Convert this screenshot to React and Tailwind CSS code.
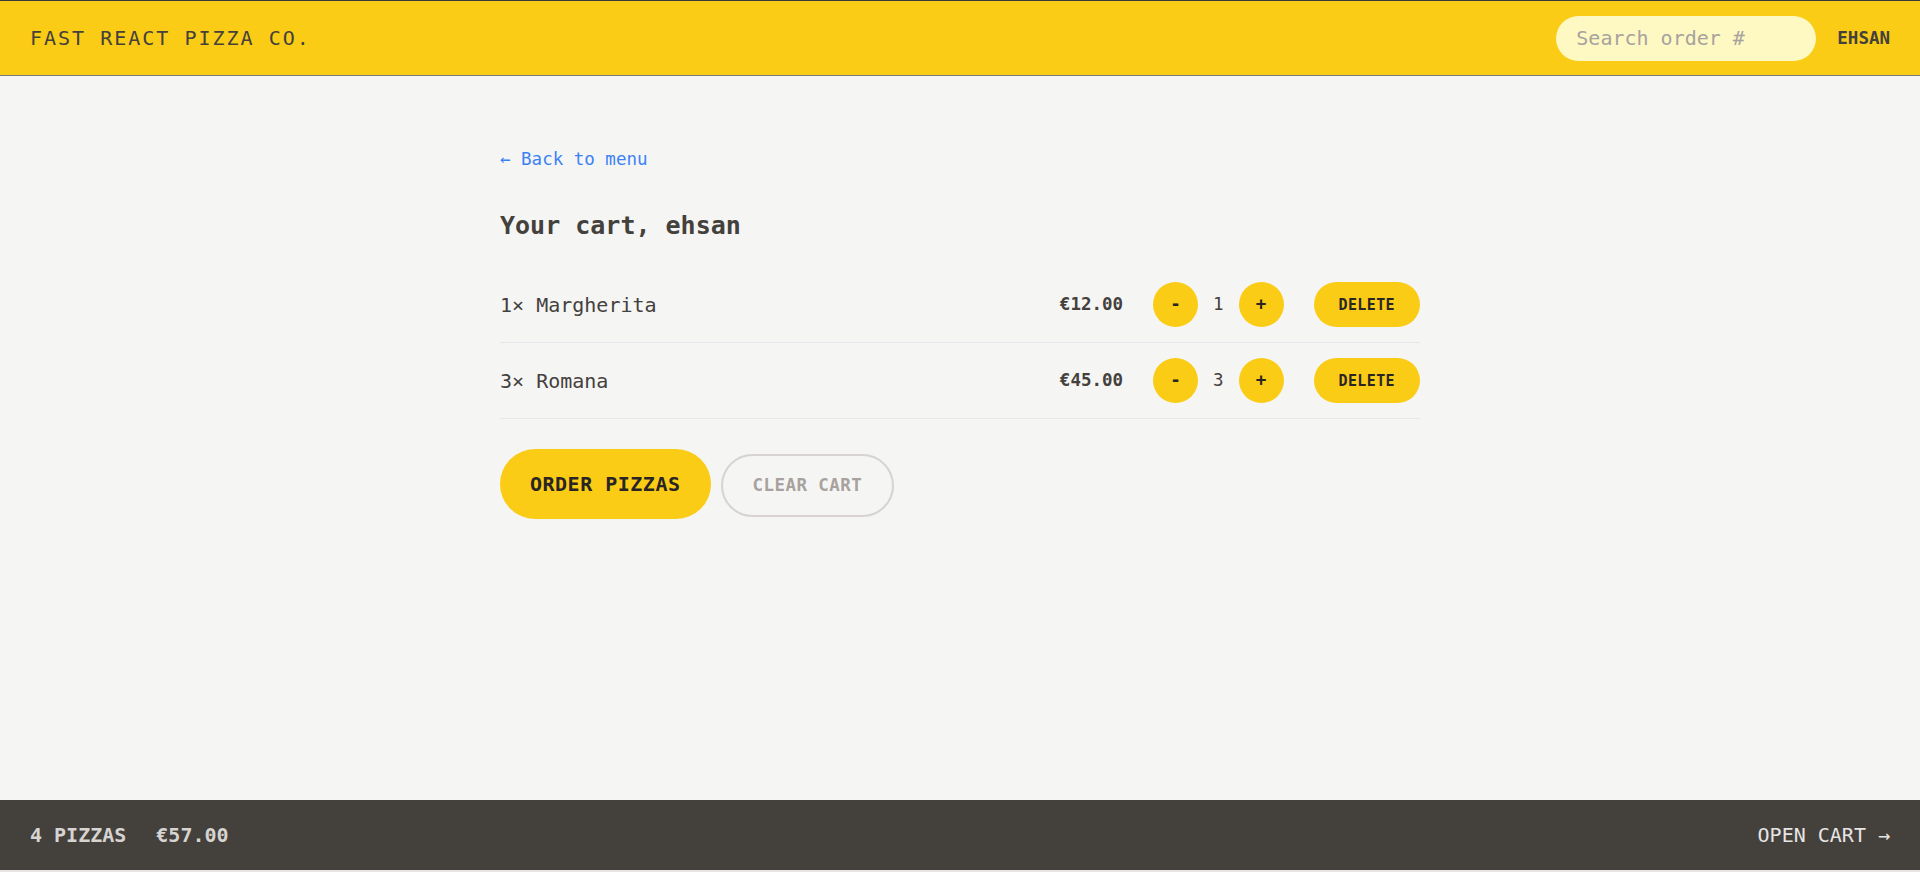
import React, { useState } from "react";

const CART = [
  { pizzaId: 1, name: "Margherita", quantity: 1, unitPrice: 12 },
  { pizzaId: 2, name: "Romana", quantity: 3, unitPrice: 15 },
];

const formatCurrency = (value) =>
  new Intl.NumberFormat("en", { style: "currency", currency: "EUR" }).format(value);

function Header() {
  return (
    <header className="flex h-[76px] items-center justify-between border-t border-b border-t-[#3a3a3a] border-b-[#7a7a7a] bg-[#facc15] px-[30px] uppercase">
      <a href="#" className="text-[20px] leading-[30px] tracking-[0.1em] text-[#44403c]">
        Fast React Pizza Co.
      </a>
      <div className="flex items-center gap-[21px]">
        <input
          placeholder="Search order #"
          className="h-[45px] w-[260px] rounded-full bg-[#fef9c3] px-[20px] text-[20px] text-[#44403c] outline-none placeholder:text-[#a8a29e]"
        />
        <span className="text-[17.5px] font-semibold leading-[25px] text-[#44403c]">ehsan</span>
      </div>
    </header>
  );
}

function RoundButton({ children }) {
  return (
    <button className="flex h-[45px] w-[45px] items-center justify-center rounded-full bg-[#facc15] text-[17.5px] font-semibold leading-[25px] text-[#292524]">
      {children}
    </button>
  );
}

function CartItem({ item }) {
  return (
    <li className="flex items-center justify-between border-b border-[#e5e7eb] py-[15px]">
      <p className="pt-[1px] text-[20px] leading-[30px]">
        {item.quantity}&times; {item.name}
      </p>
      <div className="flex items-center gap-[30px]">
        <p className="text-[17.5px] font-bold leading-[25px]">
          {formatCurrency(item.quantity * item.unitPrice)}
        </p>
        <div className="flex items-center gap-[15px]">
          <RoundButton>-</RoundButton>
          <span className="w-[10.5px] text-center text-[17.5px] font-medium leading-[25px]">
            {item.quantity}
          </span>
          <RoundButton>+</RoundButton>
        </div>
        <button className="h-[45px] rounded-full bg-[#facc15] px-[25px] text-[15px] font-semibold uppercase leading-[20px] tracking-[0.025em] text-[#292524]">
          Delete
        </button>
      </div>
    </li>
  );
}

function Cart() {
  const [cart] = useState(CART);
  return (
    <div className="mx-auto w-[960px] px-[20px] pt-[71px]">
      <a href="#" className="block text-[17.5px] leading-[25px] text-[#3b82f6]">
        &larr; Back to menu
      </a>
      <h2 className="mt-[36px] text-[25px] font-semibold leading-[35px] text-[#44403c]">
        Your cart, ehsan
      </h2>
      <ul className="mt-[24px]">
        {cart.map((item) => (
          <CartItem key={item.pizzaId} item={item} />
        ))}
      </ul>
      <div className="mt-[30px] flex items-start gap-[10px]">
        <button className="h-[70px] rounded-full bg-[#facc15] px-[30px] text-[20px] font-semibold uppercase leading-[30px] tracking-[0.025em] text-[#292524]">
          Order pizzas
        </button>
        <button className="mt-[5px] h-[63px] rounded-full border-[2.5px] border-[#d6d3d1] px-[30px] text-[17.5px] font-semibold uppercase leading-[25px] tracking-[0.025em] text-[#a8a29e]">
          Clear cart
        </button>
      </div>
    </div>
  );
}

function CartOverview() {
  return (
    <div className="flex h-[72px] items-center justify-between border-b-2 border-[#e7e5e4] bg-[#44403c] px-[30px] text-[20px] uppercase leading-[30px] text-[#e7e5e4]">
      <p className="flex gap-[30px] font-semibold text-[#d6d3d1]">
        <span>4 pizzas</span>
        <span>{formatCurrency(57)}</span>
      </p>
      <a href="#">Open cart &rarr;</a>
    </div>
  );
}

export default function App() {
  return (
    <div
      className="flex h-screen flex-col bg-[#f5f5f4] text-[#44403c]"
      style={{ fontFamily: '"DejaVu Sans Mono", "Liberation Mono", monospace' }}
    >
      <Header />
      <main className="flex-1 overflow-hidden">
        <Cart />
      </main>
      <CartOverview />
    </div>
  );
}
